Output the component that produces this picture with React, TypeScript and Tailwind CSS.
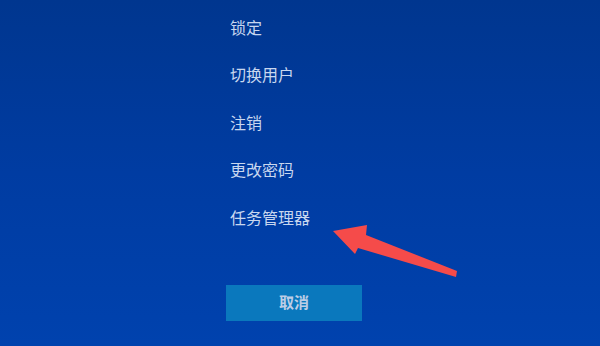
const items = ['锁定', '切换用户', '注销', '更改密码', '任务管理器'];

export default function App() {
  return (
    <div
      className="relative h-[346px] w-[600px] overflow-hidden bg-gradient-to-b from-[#00368f] via-[#003ca2] to-[#0042ae]"
      style={{ fontFamily: '"Noto Sans CJK SC", "Noto Sans", sans-serif' }}
    >
      <div className="flex flex-col pl-[230px] pt-[3px]">
        {items.map((t) => (
          <div key={t} className="flex h-[47.5px] items-center text-[16px] text-[#c8d7ef]">
            {t}
          </div>
        ))}
        <button className="mt-[44px] -ml-[4px] flex h-[36px] w-[136px] items-center justify-center bg-[#0a78bd] text-[15px] font-bold text-[#bccde6]">
          取消
        </button>
      </div>

      {/* red arrow pointing at 任务管理器 */}
      <svg className="absolute left-0 top-0" width="600" height="346" viewBox="0 0 600 346">
        <polygon
          points="333,231 367,225 366,235 457,271 456,277 358,248 355,254"
          fill="#f54b4a"
        />
      </svg>
    </div>
  );
}
